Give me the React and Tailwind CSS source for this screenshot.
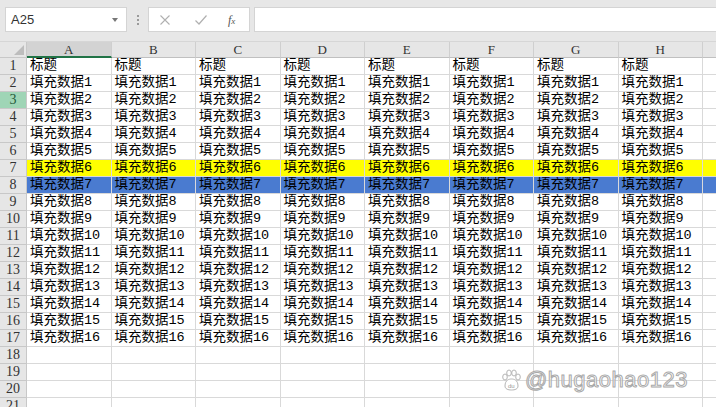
import React from 'react';

const COLS = ['A', 'B', 'C', 'D', 'E', 'F', 'G', 'H'];
const ROW_COUNT = 21;

// 每行内容：第1行标题，2~17行填充数据
function cellText(row) {
  if (row === 1) return '标题';
  if (row <= 17) return '填充数据' + (row - 1);
  return '';
}

function rowBg(row) {
  if (row === 7) return 'bg-[#ffff00]';
  if (row === 8) return 'bg-[#4a7bd0]';
  return 'bg-white';
}

function Toolbar() {
  return (
    <div className="h-[42px] bg-[#e7e7e7] flex items-start pt-[7px] pl-[5px] border-b border-[#d6d6d6]">
      <div className="w-[122px] h-[25px] bg-white border border-[#d4d4d4] flex items-center justify-between pl-[5px] pr-[8px]">
        <span className="text-[13px] text-[#333] font-['Liberation_Sans',sans-serif]">A25</span>
        <span className="w-0 h-0 border-l-[3px] border-r-[3px] border-t-[4px] border-l-transparent border-r-transparent border-t-[#777]" />
      </div>
      <div className="w-[21px] h-[25px] flex flex-col items-center justify-center gap-[2px]">
        <span className="w-[2px] h-[2px] bg-[#9a9a9a]" />
        <span className="w-[2px] h-[2px] bg-[#9a9a9a]" />
        <span className="w-[2px] h-[2px] bg-[#9a9a9a]" />
      </div>
      <div className="w-[102px] h-[25px] bg-white border border-[#d4d4d4] flex items-center">
        <svg width="12" height="12" viewBox="0 0 12 12" className="ml-[10px]">
          <path d="M1.5 1.5 L10.5 10.5 M10.5 1.5 L1.5 10.5" stroke="#b0b0b0" strokeWidth="1.1" fill="none" />
        </svg>
        <svg width="14" height="12" viewBox="0 0 14 12" className="ml-[23px]">
          <path d="M1.5 6.5 L5 10 L12.5 1.5" stroke="#b0b0b0" strokeWidth="1.2" fill="none" />
        </svg>
        <span className="ml-[20px] text-[12px] italic text-[#555] font-['Liberation_Serif',serif]">
          f<span className="text-[9px]">x</span>
        </span>
      </div>
      <div className="ml-[4px] flex-1 h-[25px] bg-white border border-[#d4d4d4] border-r-0" />
    </div>
  );
}

function HeaderRow() {
  return (
    <div className="flex h-[16px] bg-[#e6e6e6]">
      <div className="w-[27px] shrink-0 relative border-r border-b border-[#c8c8c8]">
        <svg width="10" height="10" viewBox="0 0 10 10" className="absolute right-[2px] bottom-[2px]">
          <path d="M10 0 L10 10 L0 10 Z" fill="#bdbdbd" />
        </svg>
      </div>
      {COLS.map((c, i) => (
        <div
          key={c}
          className={
            'w-[84.5px] shrink-0 flex items-center justify-center text-[13px] leading-none text-[#333] font-["Liberation_Serif",serif] border-r border-[#cfcfcf] ' +
            (i === 0 ? 'bg-[#d3d3d3] border-b-2 border-b-[#217346] text-[#1e6b40]' : 'border-b border-b-[#c0c0c0]')
          }
        >
          {c}
        </div>
      ))}
      <div className="flex-1 border-b border-[#c0c0c0]" />
    </div>
  );
}

function Row({ row }) {
  const text = cellText(row);
  const headerBg = row === 3 ? 'bg-[#9fd5b6] text-[#1f5a3a]' : 'bg-[#e6e6e6] text-[#333]';
  return (
    <div className={'flex h-[17px] ' + rowBg(row)}>
      <div
        className={
          'w-[27px] shrink-0 flex items-center justify-center text-[14px] leading-none font-["Liberation_Serif",serif] border-r border-b border-[#c8c8c8] ' +
          headerBg
        }
      >
        {row}
      </div>
      {COLS.map((c) => (
        <div
          key={c}
          className="w-[84.5px] shrink-0 pl-[3px] border-r border-b border-[#d9d9d9] text-[13.5px] leading-[16px] text-black whitespace-nowrap overflow-hidden font-['Liberation_Mono','Noto_Sans_CJK_SC',monospace]"
        >
          {text}
        </div>
      ))}
      <div className="flex-1 border-b border-[#d9d9d9]" />
    </div>
  );
}

function Watermark() {
  return (
    <div className="absolute left-[500px] top-[369px] flex items-center pointer-events-none">
      <svg width="22" height="22" viewBox="0 0 22 22">
        <g fill="none" stroke="#b5b5b5" strokeWidth="1">
          <ellipse cx="5" cy="8" rx="2.3" ry="3" />
          <ellipse cx="9" cy="4" rx="2.3" ry="3" />
          <ellipse cx="14" cy="4" rx="2.3" ry="3" />
          <ellipse cx="18" cy="8" rx="2.3" ry="3" />
          <path d="M5 17 C5 11 9 10 11.5 10 C14 10 18 11 18 17 C18 20 15 21 11.5 21 C8 21 5 20 5 17 Z" fill="#fff" />
        </g>
        <text x="8" y="19" fontSize="6" fill="#9a9a9a" fontFamily="Liberation Sans, sans-serif">du</text>
      </svg>
      <span className="ml-[3px] text-[22px] leading-none tracking-[0.5px] text-white/70 font-['Liberation_Sans',sans-serif] [-webkit-text-stroke:1px_#a9a9a9]">
        @hugaohao123
      </span>
    </div>
  );
}

export default function App() {
  const rows = [];
  for (let r = 1; r <= ROW_COUNT; r++) rows.push(r);
  return (
    <div className="relative w-[716px] h-[407px] overflow-hidden bg-white">
      <Toolbar />
      <HeaderRow />
      {rows.map((r) => (
        <Row key={r} row={r} />
      ))}
      <Watermark />
    </div>
  );
}
